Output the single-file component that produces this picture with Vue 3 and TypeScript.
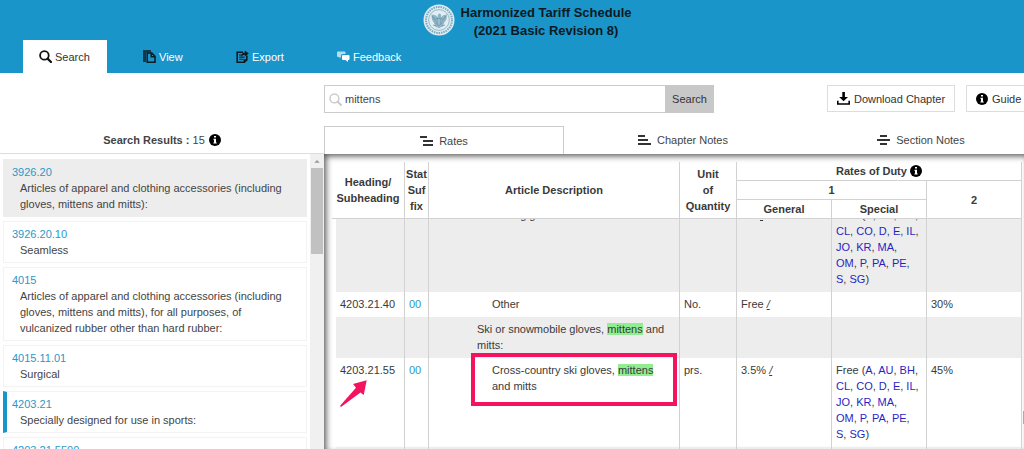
<script setup lang="ts">
import { ref } from 'vue'

interface Result {
  code: string
  text: string
  state?: 'hover' | 'current'
}
interface Row {
  code: string
  suffix: string
  before: string
  mark?: string
  after?: string
  level: 'mid' | 'deep'
  unit: string
  general: string
  special: string[]
  other: string
  shaded?: boolean
  flagged?: boolean
}

const query = ref('mittens')

const results: Result[] = [
  { code: '3926.20', text: 'Articles of apparel and clothing accessories (including gloves, mittens and mitts):', state: 'hover' },
  { code: '3926.20.10', text: 'Seamless' },
  { code: '4015', text: 'Articles of apparel and clothing accessories (including gloves, mittens and mitts), for all purposes, of vulcanized rubber other than hard rubber:' },
  { code: '4015.11.01', text: 'Surgical' },
  { code: '4203.21', text: 'Specially designed for use in sports:', state: 'current' },
  { code: '4203.21.5500', text: '' },
]

const programs = ['A', 'AU', 'BH', 'CL', 'CO', 'D', 'E', 'IL', 'JO', 'KR', 'MA', 'OM', 'P', 'PA', 'PE', 'S', 'SG']

const rows: Row[] = [
  { code: '', suffix: '', before: 'Batting gloves', level: 'deep', unit: '', general: '3%', special: programs, other: '', shaded: true },
  { code: '4203.21.40', suffix: '00', before: 'Other', level: 'deep', unit: 'No.', general: 'Free', special: [], other: '30%' },
  { code: '', suffix: '', before: 'Ski or snowmobile gloves, ', mark: 'mittens', after: ' and mitts:', level: 'mid', unit: '', general: '', special: [], other: '', shaded: true },
  { code: '4203.21.55', suffix: '00', before: 'Cross-country ski gloves, ', mark: 'mittens', after: ' and mitts', level: 'deep', unit: 'prs.', general: '3.5%', special: programs, other: '45%', flagged: true },
  { code: '', suffix: '', before: '', level: 'deep', unit: '', general: '', special: [], other: '', shaded: true },
]
</script>

<template>
  <div class="page">
    <header class="top">
      <div class="brand">
        <svg class="seal" viewBox="0 0 32 32" aria-hidden="true">
          <circle cx="16" cy="16" r="15.5" fill="#dcecf3" />
          <circle cx="16" cy="16" r="13" fill="none" stroke="#7fa8bb" stroke-width="2" stroke-dasharray="1.5 .9" />
          <circle cx="16" cy="16" r="10.4" fill="#e0edf2" stroke="#86adbf" stroke-width=".8" />
          <path d="M8.5 10.5l4 .8 2 2 .6-3 1.6-.8 1.2 1 .3 2.8 2-2 3.8-.8-.6 5-2.3 3.2-1.2 3.6-3.9 2-3.8-2-1.3-3.6-2-3.2z" fill="#8fb4c4" />
          <path d="M13.2 14.5h5.6v3.5q-.5 2.6-2.8 3.6-2.3-1-2.8-3.6z" fill="#c9dde5" stroke="#5b8ba3" stroke-width=".7" />
          <path d="M14.6 15v5M16 15v6M17.4 15v5M9 12l3 4M23 12l-3 4M10 21l3 1M22 21l-3 1" stroke="#5b8ba3" stroke-width=".7" />
        </svg>
        <h1>Harmonized Tariff Schedule<br />(2021 Basic Revision 8)</h1>
      </div>
      <nav class="menu">
        <a href="#search" class="menu-item active">
          <svg class="ico" viewBox="0 0 13 13"><circle cx="5.4" cy="5.4" r="4.3" fill="none" stroke="#111" stroke-width="1.8" /><path d="M8.6 8.6L12 12" stroke="#111" stroke-width="2.2" stroke-linecap="round" /></svg>
          Search
        </a>
        <a href="#view" class="menu-item view">
          <svg class="ico" viewBox="0 0 13 13"><path d="M0 0H8V2.500H3V12H0z" fill="#14384a" /><path d="M4.200 3H8.800L12 6.200V12.200H4.200zM8.300 3.200V6.700H11.800" fill="none" stroke="#0c1a22" stroke-width="1.500" /></svg>
          View
        </a>
        <a href="#export" class="menu-item export">
          <svg class="ico" viewBox="0 0 13 13"><path d="M7 2.200H1.200V12.200H8.300L10.800 9.800V5.500" fill="none" stroke="#0c1a22" stroke-width="1.600" /><path d="M3.200 5H6M3.200 7.200H8.500M3.200 9.400H7.500" stroke="#14384a" stroke-width="1.400" /><path d="M5.500 6.500Q5.500 2.800 8.800 2.600V.5L12.800 3.500 8.800 6.500V4.800Q7 4.700 5.500 6.500z" fill="#0c1a22" /><path d="M7.600 12.700V9.300H11.300z" fill="#0c1a22" /></svg>
          Export
        </a>
        <a href="#feedback" class="menu-item feedback">
          <svg class="ico" viewBox="0 0 13 13"><path d="M1 1.500H7.500Q8.500 1.500 8.500 2.500V4H5.500Q4 4 4 5.500V7L2.500 8.500V7H1Q0 7 0 6V2.500Q0 1.500 1 1.500z" fill="#b5dcee" /><path d="M6 5H11.500Q12.500 5 12.500 6V9Q12.500 10 11.500 10H11V12L8.500 10H6Q5 10 5 9V6Q5 5 6 5z" fill="#fff" /></svg>
          Feedback
        </a>
      </nav>
    </header>

    <main class="body">
      <aside class="side">
        <h2 class="side-title">
          <span><b>Search Results :</b> 15</span>
          <svg class="info" viewBox="0 0 12 12"><circle cx="6" cy="6" r="6" fill="#000" /><path d="M5 2h2v1.600H5zM4.400 4.800H7V8.400h.7v1H4.400v-1H5V5.800h-.6z" fill="#fff" /></svg>
        </h2>
        <div class="side-body">
          <ul class="results">
            <li v-for="r in results" :key="r.code" class="result" :class="r.state">
              <a :href="'#' + r.code">{{ r.code }}</a>
              <p>{{ r.text }}</p>
            </li>
          </ul>
          <div class="scroll">
            <svg viewBox="0 0 13 14"><path d="M3.500 9L6.500 6l3 3z" fill="#999" /></svg>
            <div class="thumb"></div>
          </div>
        </div>
      </aside>

      <section class="main">
        <div class="tools">
          <form class="search" @submit.prevent>
            <label class="field">
              <svg class="ico" viewBox="0 0 13 13"><circle cx="5.400" cy="5.400" r="4.400" fill="none" stroke="#ccc" stroke-width="1.500" /><path d="M8.700 8.700L12 12" stroke="#ccc" stroke-width="2" stroke-linecap="round" /></svg>
              <input v-model="query" type="text" aria-label="Search term" />
            </label>
            <button type="submit">Search</button>
          </form>
          <div class="actions">
            <button type="button">
              <svg class="ico" viewBox="0 0 13 13"><path d="M5.300 0h2.600v5H11L6.600 9.300 2.200 5h3.100z" fill="#000" /><path d="M.8 8.800V12H12.200V8.800" fill="none" stroke="#000" stroke-width="1.600" /></svg>
              Download Chapter
            </button>
            <button type="button">
              <svg class="info" viewBox="0 0 12 12"><circle cx="6" cy="6" r="6" fill="#000" /><path d="M5 2h2v1.600H5zM4.400 4.800H7V8.400h.7v1H4.400v-1H5V5.800h-.6z" fill="#fff" /></svg>
              Guide
            </button>
          </div>
        </div>

        <nav class="tabs">
          <a href="#rates" class="selected">
            <svg class="bars" viewBox="0 0 14 12"><path d="M0 2h7M3 6h10M3 10h10" stroke="#333" stroke-width="2" /></svg>
            Rates
          </a>
          <a href="#chapter-notes">
            <svg class="bars" viewBox="0 0 14 12"><path d="M0 2h7M0 6h10M0 10h13" stroke="#333" stroke-width="2" /></svg>
            Chapter Notes
          </a>
          <a href="#section-notes">
            <svg class="bars" viewBox="0 0 14 12"><path d="M3 2h7M0 6h13M3 10h7" stroke="#333" stroke-width="2" /></svg>
            Section Notes
          </a>
        </nav>

        <div class="panel">
          <table class="grid head">
            <colgroup>
              <col class="c-head" /><col class="c-stat" /><col /><col class="c-unit" /><col class="c-rate" /><col class="c-rate" /><col class="c-rate" />
            </colgroup>
            <thead>
              <tr>
                <th rowspan="3">Heading/<br />Subheading</th>
                <th rowspan="3">Stat<br />Suf<br />fix</th>
                <th rowspan="3">Article Description</th>
                <th rowspan="3">Unit<br />of<br />Quantity</th>
                <th colspan="3">
                  Rates of Duty
                  <svg class="info" viewBox="0 0 12 12"><circle cx="6" cy="6" r="6" fill="#000" /><path d="M5 2h2v1.600H5zM4.400 4.800H7V8.400h.7v1H4.400v-1H5V5.800h-.6z" fill="#fff" /></svg>
                </th>
              </tr>
              <tr>
                <th colspan="2">1</th>
                <th rowspan="2">2</th>
              </tr>
              <tr>
                <th>General</th>
                <th>Special</th>
              </tr>
            </thead>
          </table>
          <div class="viewport">
            <table class="grid data">
              <colgroup>
                <col class="c-code" /><col class="c-stat" /><col /><col class="c-unit" /><col class="c-rate" /><col class="c-rate" /><col class="c-rate" />
              </colgroup>
              <tbody>
                <tr v-for="(row, i) in rows" :key="i" :class="{ shaded: row.shaded }">
                  <td>
                    {{ row.code }}
                    <svg v-if="row.flagged" class="arrow" viewBox="0 0 29 29"><path d="M27.700 1.300L14 5l3 3.700L1.300 26.500q-.3 1.600 1 1.200L21.500 13.500l3.200 2.500z" fill="#f3135f" /></svg>
                  </td>
                  <td><a v-if="row.suffix" class="suffix" href="#stat">{{ row.suffix }}</a></td>
                  <td :class="row.level">
                    {{ row.before }}<mark v-if="row.mark">{{ row.mark }}</mark>{{ row.after }}
                    <div v-if="row.flagged" class="callout"></div>
                  </td>
                  <td>{{ row.unit }}</td>
                  <td><template v-if="row.general">{{ row.general }} <a class="note" href="#note">/</a></template></td>
                  <td class="special"><template v-if="row.special.length">Free (<template v-for="(p, k) in row.special" :key="p"><a :href="'#' + p">{{ p }}</a>{{ k < row.special.length - 1 ? ', ' : ')' }}</template></template></td>
                  <td>{{ row.other }}</td>
                </tr>
              </tbody>
            </table>
          </div>
          <div class="edge"></div>
        </div>
      </section>
    </main>
  </div>
</template>

<style>
body {
  margin: 0;
  overflow: hidden;
}
</style>

<style scoped>
* {
  box-sizing: border-box;
}
.page {
  display: flex;
  flex-direction: column;
  height: 100vh;
  overflow: hidden;
  background: #fff;
  color: #444;
  font: 11px/16px "Liberation Sans", Arial, sans-serif;
}
a {
  color: inherit;
  text-decoration: none;
}
button,
input {
  font: inherit;
  color: inherit;
}
.ico {
  width: 13px;
  height: 13px;
  flex: none;
}
.info {
  width: 12px;
  height: 12px;
  flex: none;
}
.top {
  flex: none;
  background: #1a95ca;
}
.brand {
  display: flex;
  justify-content: center;
  gap: 6px;
  height: 40px;
  padding: 4px 0 0 30px;
}
.seal {
  width: 32px;
  height: 32px;
}
h1 {
  margin: 0;
  color: #0b1a22;
  font-size: 13px;
  line-height: 18px;
  text-align: center;
}
.menu {
  display: flex;
  padding-left: 23px;
}
.menu-item {
  display: flex;
  align-items: center;
  gap: 3px;
  height: 33px;
  padding: 0 16px;
  color: #fff;
}
.menu-item.active {
  width: 84px;
  background: #fff;
  color: #333;
}
.view {
  width: 92px;
  padding-left: 36px;
}
.export {
  width: 102px;
  padding-left: 37px;
}
.feedback {
  padding-left: 36px;
}
.body {
  display: grid;
  grid-template-columns: 324px minmax(0, 1fr);
  flex: 1;
  min-height: 0;
}
.side {
  display: flex;
  flex-direction: column;
  min-height: 0;
}
.side-title {
  display: flex;
  align-items: center;
  justify-content: center;
  gap: 4px;
  flex: none;
  height: 81px;
  margin: 0;
  padding-top: 54px;
  border-bottom: 1px solid #ddd;
  font: inherit;
}
.side-body {
  display: flex;
  flex: 1;
  min-height: 0;
}
.results {
  display: flex;
  flex-direction: column;
  gap: 4px;
  flex: 1;
  margin: 0;
  padding: 5px 3px 0;
  overflow: hidden;
  list-style: none;
}
.result {
  flex: none;
  padding: 4px 12px 4px 8px;
  border: 1px solid #f3f3f3;
}
.result a {
  color: #2a98c8;
}
.result p {
  margin: 0;
  padding-left: 8px;
}
.result.hover {
  background: #ededed;
  border-color: #ededed;
}
.result.current {
  border-left: 4px solid #1a95ca;
  padding-left: 5px;
}
.scroll {
  width: 14px;
  padding: 0 1px;
  background: #f0f0f0;
}
.scroll svg {
  display: block;
  width: 12px;
  height: 14px;
}
.thumb {
  height: 86px;
  background: #c1c1c1;
}
.main {
  display: flex;
  flex-direction: column;
  min-height: 0;
  overflow: hidden;
}
.tools {
  display: flex;
  justify-content: space-between;
  flex: none;
  height: 53px;
  margin-right: -8px;
  padding-top: 12px;
}
.search {
  display: flex;
  width: 390px;
  height: 28px;
}
.field {
  display: flex;
  align-items: center;
  gap: 3px;
  flex: 1;
  min-width: 0;
  padding-left: 4px;
  border: 1px solid #ccc;
  border-right: 0;
}
.field input {
  flex: 1;
  min-width: 0;
  padding: 0;
  border: 0;
  outline: 0;
  background: none;
}
.search button {
  width: 49px;
  padding: 0;
  border: 0;
  background: #c8c8c8;
  color: #333;
}
.actions {
  display: flex;
  gap: 11px;
}
.actions button {
  display: flex;
  align-items: center;
  justify-content: center;
  gap: 4px;
  width: 128px;
  height: 27px;
  padding: 0;
  border: 1px solid #ddd;
  background: #fff;
  color: #333;
}
.actions button + button {
  justify-content: flex-start;
  width: 66px;
  padding-left: 9px;
}
.tabs {
  display: flex;
  flex: none;
  height: 28px;
  margin-right: -16px;
}
.tabs a {
  display: flex;
  align-items: center;
  justify-content: center;
  gap: 5px;
  flex: 1;
}
.tabs .selected {
  border: 1px solid #ccc;
  border-bottom: 0;
}
.bars {
  width: 14px;
  height: 12px;
}
.panel {
  position: relative;
  display: flex;
  flex-direction: column;
  flex: 1;
  min-height: 0;
  padding: 8px 2px 0 8px;
  box-shadow: inset 3px 3px 6px -1px #555;
  color: #3a3a3a;
}
.grid {
  width: 100%;
  border-spacing: 0;
  table-layout: fixed;
}
.c-head {
  width: 73px;
}
.c-code {
  width: 69px;
}
.c-stat {
  width: 24px;
}
.c-unit {
  width: 57px;
}
.c-rate {
  width: 95px;
}
.head {
  flex: none;
}
.head th {
  height: 19px;
  padding: 1px 0;
  border-right: 1px solid #d2d2d2;
  border-bottom: 1px solid #d2d2d2;
}
.head th .info {
  vertical-align: -2px;
}
.viewport {
  flex: 1;
  min-height: 0;
  padding-left: 4px;
  overflow: hidden;
}
.data {
  margin-top: -16px;
}
.data td {
  position: relative;
  padding: 4px 4px 5px;
  border-right: 1px solid #d2d2d2;
  vertical-align: top;
}
.data .shaded td {
  background: #ededed;
}
.data .deep {
  padding-left: 63px;
  padding-right: 12px;
}
.data .mid {
  padding-left: 48px;
  padding-right: 12px;
}
.data .special {
  padding-right: 6px;
}
.special a {
  color: #2a1fc4;
}
.suffix {
  color: #2a98c8;
}
.note {
  font-style: italic;
  text-decoration: underline;
}
mark {
  background: #90ee90;
  color: inherit;
}
.callout {
  position: absolute;
  top: -5px;
  left: 42px;
  width: 206px;
  height: 53px;
  border: 4px solid #f3135f;
  z-index: 1;
}
.arrow {
  position: absolute;
  top: 21px;
  left: 3px;
  width: 29px;
  height: 29px;
}
.edge {
  position: absolute;
  right: 0;
  bottom: 25px;
  width: 1px;
  height: 13px;
  background: #aaa;
}
</style>
